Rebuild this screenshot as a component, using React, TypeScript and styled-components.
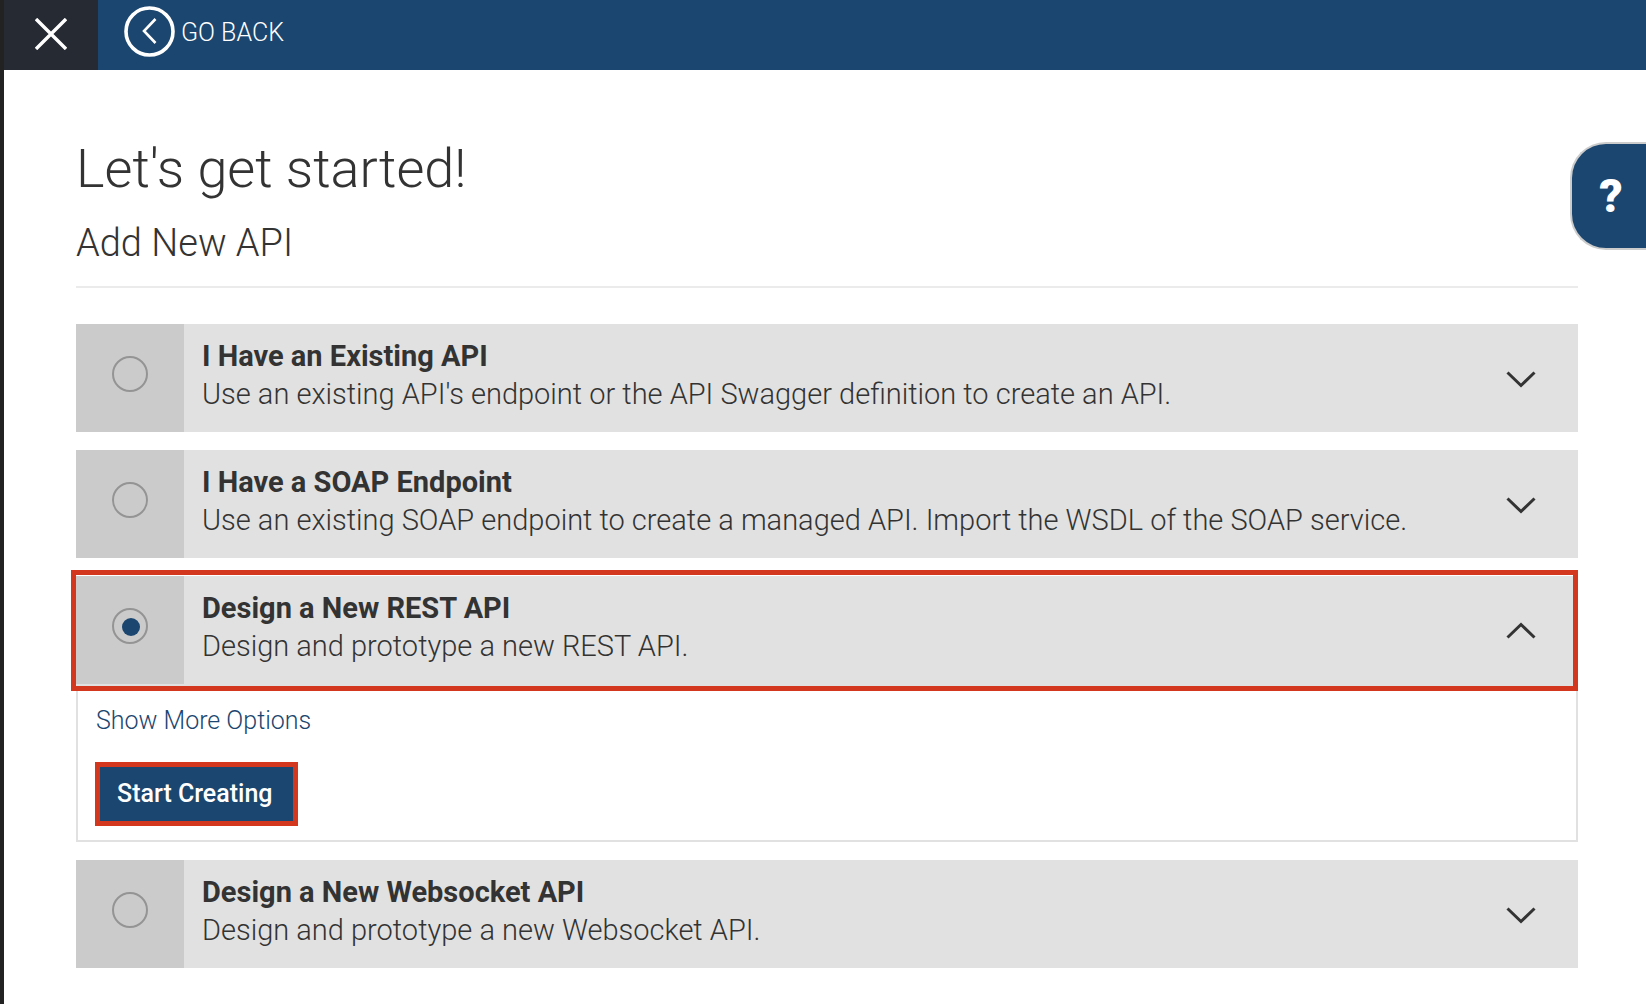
import React, { useState } from "react";
import styled, { createGlobalStyle, css } from "styled-components";

const navy = "#1b466f";
const red = "#d3381f";
const ink = "#333333";
const grey = "#e1e1e1";

const GlobalStyle = createGlobalStyle`
  *, *::before, *::after { box-sizing: border-box; }
  body {
    margin: 0;
    background: #ffffff;
    color: ${ink};
    font-family: Roboto, "Liberation Sans", sans-serif;
    font-weight: 300;
  }
  button { font: inherit; border: 0; padding: 0; cursor: pointer; }
`;

const Page = styled.div`
  position: relative;
  min-height: 100vh;
  border-left: 4px solid #222222;
`;

const TopBar = styled.header`
  display: flex;
  height: 70px;
  background: ${navy};
`;

const CloseButton = styled.button`
  display: grid;
  place-items: center;
  width: 94px;
  padding-bottom: 2px;
  background: #262a33;
`;

const BackButton = styled.button`
  display: flex;
  align-items: center;
  gap: 6px;
  margin-left: 26px;
  padding-bottom: 8px;
  background: transparent;
  color: #ffffff;
  font-size: 25px;
  line-height: 30px;

  span { padding-top: 4px; }
`;

const Content = styled.main`
  padding: 67px 68px 36px 72px;
`;

const Title = styled.h1`
  margin: 0;
  font-size: 54px;
  font-weight: 300;
  line-height: 64px;
`;

const Subtitle = styled.h2`
  margin: 0 0 36px;
  padding: 20px 0 21px;
  border-bottom: 2px solid #ebebeb;
  font-size: 38px;
  font-weight: 300;
  line-height: 44px;
`;

const OptionList = styled.div`
  display: flex;
  flex-direction: column;
  gap: 18px;
`;

const OptionHeader = styled.label<{ $marked: boolean }>`
  position: relative;
  display: flex;
  height: 108px;
  background: ${grey};
  cursor: pointer;

  ${({ $marked }) =>
    $marked &&
    css`
      &::after {
        content: "";
        position: absolute;
        inset: -6px 0 -7px -5px;
        border: 5px solid ${red};
      }
    `}
`;

const RadioCell = styled.span`
  display: flex;
  justify-content: center;
  width: 108px;
  padding-top: 32px;
  background: #cbcbcb;
`;

const Radio = styled.input`
  appearance: none;
  width: 36px;
  height: 36px;
  margin: 0;
  padding: 8px;
  border: 2px solid #949494;
  border-radius: 50%;

  &:checked::before {
    content: "";
    display: block;
    width: 18px;
    height: 18px;
    border-radius: 50%;
    background: ${navy};
  }
`;

const OptionText = styled.span`
  flex: 1;
  display: flex;
  flex-direction: column;
  padding: 13px 18px;
  font-size: 29px;
  line-height: 38px;

  strong { font-weight: 700; }
`;

const ChevronCell = styled.span`
  display: grid;
  place-items: center;
  width: 115px;
  padding-top: 2px;
`;

const Panel = styled.div`
  display: flex;
  flex-direction: column;
  align-items: flex-start;
  gap: 26px;
  padding: 19px 18px 15px;
  border: 2px solid ${grey};
`;

const MoreLink = styled.a`
  color: ${navy};
  font-size: 25px;
  line-height: 32px;
  text-decoration: none;
`;

const StartButton = styled.button`
  position: relative;
  height: 62px;
  padding: 0 24px 2px 21px;
  background: ${navy};
  color: #ffffff;
  font-size: 25px;
  font-weight: 500;

  &::after {
    content: "";
    position: absolute;
    inset: -1px;
    border: 5px solid ${red};
  }
`;

const HelpButton = styled.button`
  position: absolute;
  top: 142px;
  right: 0;
  width: 76px;
  height: 108px;
  padding-left: 4px;
  border: 2px solid #cccccc;
  border-right: 0;
  border-radius: 36px 0 0 36px;
  background: ${navy};
  color: #ffffff;
  font-size: 46px;
  font-weight: 900;
`;

const options = [
  {
    id: "existing",
    title: "I Have an Existing API",
    text: "Use an existing API's endpoint or the API Swagger definition to create an API.",
  },
  {
    id: "soap",
    title: "I Have a SOAP Endpoint",
    text: "Use an existing SOAP endpoint to create a managed API. Import the WSDL of the SOAP service.",
  },
  {
    id: "rest",
    title: "Design a New REST API",
    text: "Design and prototype a new REST API.",
  },
  {
    id: "websocket",
    title: "Design a New Websocket API",
    text: "Design and prototype a new Websocket API.",
  },
];

function Chevron({ up }: { up: boolean }) {
  return (
    <svg width="30" height="18" viewBox="0 0 30 18" fill="none" stroke={ink} strokeWidth="3" aria-hidden="true">
      <path d={up ? "M1.5 15.5 15 2.5l13.5 13" : "M1.5 2.5 15 15.5l13.5-13"} />
    </svg>
  );
}

export default function App() {
  const [selected, setSelected] = useState("rest");

  return (
    <>
      <GlobalStyle />
      <Page>
        <TopBar>
          <CloseButton aria-label="Close">
            <svg width="32" height="32" viewBox="0 0 32 32" stroke="#fff" strokeWidth="3.4" aria-hidden="true">
              <path d="M1 1l30 30M31 1 1 31" />
            </svg>
          </CloseButton>
          <BackButton>
            <svg width="51" height="51" viewBox="0 0 51 51" fill="none" stroke="#fff" aria-hidden="true">
              <circle cx="25.5" cy="25.5" r="23.5" strokeWidth="3.6" />
              <path d="M31.5 13 20 25l11.5 12" strokeWidth="2.6" />
            </svg>
            <span>GO BACK</span>
          </BackButton>
        </TopBar>
        <Content>
          <Title>Let's get started!</Title>
          <Subtitle>Add New API</Subtitle>
          <OptionList>
            {options.map((option) => {
              const open = option.id === selected;
              return (
                <section key={option.id}>
                  <OptionHeader $marked={open}>
                    <RadioCell>
                      <Radio
                        type="radio"
                        name="api-option"
                        checked={open}
                        onChange={() => setSelected(option.id)}
                      />
                    </RadioCell>
                    <OptionText>
                      <strong>{option.title}</strong>
                      <span>{option.text}</span>
                    </OptionText>
                    <ChevronCell>
                      <Chevron up={open} />
                    </ChevronCell>
                  </OptionHeader>
                  {open && (
                    <Panel>
                      <MoreLink href="#more">Show More Options</MoreLink>
                      <StartButton>Start Creating</StartButton>
                    </Panel>
                  )}
                </section>
              );
            })}
          </OptionList>
        </Content>
        <HelpButton aria-label="Help">?</HelpButton>
      </Page>
    </>
  );
}
